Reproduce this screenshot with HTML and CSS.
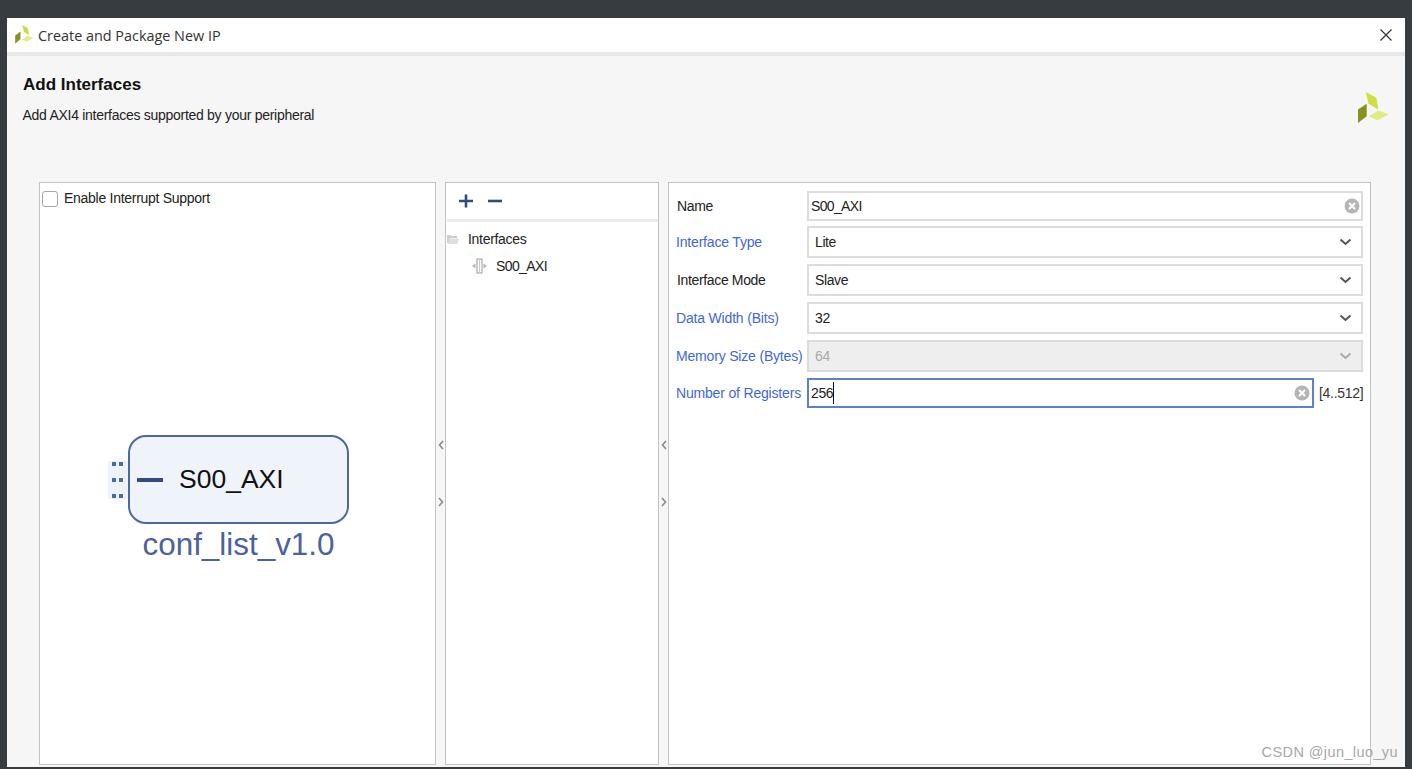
FILE: index.html
```html
<!DOCTYPE html>
<html lang="en">
<head>
<meta charset="utf-8">
<title>Create and Package New IP</title>
<link rel="stylesheet" href="styles.css">
</head>
<body>
<div class="window">
  <header class="titlebar">
    <svg class="title-logo" width="20" height="20" viewBox="0 0 32 34"><polygon points="13,0 22,5 25,17 16,12" fill="#c9d94a"/><polygon points="1,32 1,18 10,11 10,24" fill="#87911c"/><polygon points="12,25 22,18 32,22 21,28" fill="#e2ec8e"/></svg>
    <span class="title-text">Create and Package New IP</span>
    <svg class="close" width="14" height="14" viewBox="0 0 14 14"><path d="M1.5 1.5 12.5 12.5M12.5 1.5 1.5 12.5" stroke="#333" stroke-width="1.2" fill="none"/></svg>
  </header>
  <div class="band"></div>
  <section class="intro">
    <div>
      <h1 class="heading">Add Interfaces</h1>
      <p class="sub">Add AXI4 interfaces supported by your peripheral</p>
    </div>
    <svg class="big-logo" width="33" height="33" viewBox="0 0 32 34"><polygon points="8,0 19,6 21,18 11,12" fill="#cfdf3f"/><polygon points="0,32 0,18 9,12 9,25" fill="#87911c"/><polygon points="11,25 21,19 32,23 20,29" fill="#e0ec80"/></svg>
  </section>
  <main class="panels">
    <div class="panel left">
      <label class="check"><span class="box"></span>Enable Interrupt Support</label>
      <div class="symbol">
        <div class="port-dots">
          <i></i><i></i><i></i><i></i><i></i><i></i>
        </div>
        <div class="block"><span class="dash"></span><span class="block-name">S00_AXI</span></div>
        <div class="symbol-name">conf_list_v1.0</div>
      </div>
    </div>
    <div class="gutter">
      <svg width="6" height="10" viewBox="0 0 6 10"><path d="M5 1 1.5 5 5 9" stroke="#8a8a8a" stroke-width="1.6" fill="none"/></svg>
      <svg width="6" height="10" viewBox="0 0 6 10"><path d="M1 1 4.5 5 1 9" stroke="#8a8a8a" stroke-width="1.6" fill="none"/></svg>
    </div>
    <div class="panel middle">
      <div class="toolbar">
        <svg width="16" height="16" viewBox="0 0 16 16"><path d="M8 1.5V14.500M1 8H15" stroke="#34497f" stroke-width="2.6" fill="none"/></svg>
        <svg width="16" height="16" viewBox="0 0 16 16"><path d="M1 8H15" stroke="#34497f" stroke-width="2.6" fill="none"/></svg>
      </div>
      <div class="tree-row root">
        <svg width="12" height="10" viewBox="0 0 12 10"><path d="M0 1h4l1 1h5v2H3L1.500 9H0z" fill="#cfcfcf"/><path d="M3 4.500h9L10.500 10H1z" fill="#dedede"/></svg>
        <span>Interfaces</span>
      </div>
      <div class="tree-row child">
        <svg width="15" height="16" viewBox="0 0 15 16"><rect x="5" y="1" width="5" height="14" fill="#fff" stroke="#9a9a9a"/><path d="M0 8 3.500 5.500V10.500zM15 8 11.500 5.500V10.500z" fill="#b4b4b4"/><path d="M7.500 2V14" stroke="#c8c8c8"/></svg>
        <span>S00_AXI</span>
      </div>
    </div>
    <div class="gutter">
      <svg width="6" height="10" viewBox="0 0 6 10"><path d="M5 1 1.500 5 5 9" stroke="#8a8a8a" stroke-width="1.6" fill="none"/></svg>
      <svg width="6" height="10" viewBox="0 0 6 10"><path d="M1 1 4.500 5 1 9" stroke="#8a8a8a" stroke-width="1.600" fill="none"/></svg>
    </div>
    <div class="panel right">
      <div class="form-row row-name">
        <label class="lbl">Name</label>
        <div class="field text"><span class="axi">S00_AXI</span>
          <svg class="clear" width="16" height="16" viewBox="0 0 16 16"><circle cx="8" cy="8" r="7.500" fill="#b5b5b5"/><path d="M5 5 11 11M11 5 5 11" stroke="#fff" stroke-width="2"/></svg>
        </div>
      </div>
      <div class="form-row row-tall">
        <label class="lbl link">Interface Type</label>
        <div class="field select"><span>Lite</span>
          <svg class="chev" width="13" height="8" viewBox="0 0 13 8"><path d="M1.500 1.500 6.500 6 11.500 1.500" stroke="#555" stroke-width="2" fill="none"/></svg>
        </div>
      </div>
      <div class="form-row row-tall">
        <label class="lbl">Interface Mode</label>
        <div class="field select"><span>Slave</span>
          <svg class="chev" width="13" height="8" viewBox="0 0 13 8"><path d="M1.500 1.500 6.500 6 11.500 1.500" stroke="#555" stroke-width="2" fill="none"/></svg>
        </div>
      </div>
      <div class="form-row row-tall">
        <label class="lbl link">Data Width (Bits)</label>
        <div class="field select"><span>32</span>
          <svg class="chev" width="13" height="8" viewBox="0 0 13 8"><path d="M1.500 1.500 6.500 6 11.500 1.500" stroke="#555" stroke-width="2" fill="none"/></svg>
        </div>
      </div>
      <div class="form-row row-tall">
        <label class="lbl link">Memory Size (Bytes)</label>
        <div class="field select disabled"><span>64</span>
          <svg class="chev" width="13" height="8" viewBox="0 0 13 8"><path d="M1.500 1.500 6.500 6 11.500 1.500" stroke="#aaa" stroke-width="2" fill="none"/></svg>
        </div>
      </div>
      <div class="form-row row-num">
        <label class="lbl link">Number of Registers</label>
        <div class="field text focus"><span class="caret">256</span>
          <svg class="clear" width="16" height="16" viewBox="0 0 16 16"><circle cx="8" cy="8" r="7.500" fill="#b5b5b5"/><path d="M5 5 11 11M11 5 5 11" stroke="#fff" stroke-width="2"/></svg>
        </div>
        <span class="range">[4..512]</span>
      </div>
    </div>
  </main>
</div>
<div class="watermark">CSDN @jun_luo_yu</div>
</body>
</html>
```
FILE: styles.css
```css
* { box-sizing: border-box; }
html, body { height: 100%; }
body {
  margin: 0;
  padding: 18px 7px 2px;
  height: 769px;
  overflow: hidden;
  background: #373c40;
  font-family: "Liberation Sans", Arial, sans-serif;
  font-size: 14px;
  color: #222;
  position: relative;
}
.window {
  height: 749px;
  background: #f6f6f6;
  display: flex;
  flex-direction: column;
}
.titlebar {
  height: 34px;
  flex: none;
  background: #fff;
  display: flex;
  align-items: center;
  padding: 0 12px 0 7px;
}
.title-logo { margin-right: 4px; }
.title-text { font-family: "Open Sans", sans-serif; font-size: 14.400px; color: #333; flex: 1; }
.band { height: 4px; flex: none; background: #e8e8e8; }
.intro {
  height: 126px;
  flex: none;
  display: flex;
  justify-content: space-between;
  padding: 19px 15px 0 16px;
}
.heading { margin: 0; font-size: 17px; line-height: 19px; font-weight: 700; color: #111; }
.sub { margin: 13px 0 0 -0.5px; font-size: 14px; line-height: 16px; letter-spacing: -0.28px; color: #222; }
.big-logo { margin-top: 17px; }
.panels {
  flex: 1;
  display: flex;
  padding: 0 34px 2px 32px;
  min-height: 0;
}
.panel { background: #fff; border: 1px solid #c4c4c4; }
.left { width: 397px; flex: none; position: relative; }
.middle { width: 214px; flex: none; }
.right { flex: 1; padding-top: 8px; }
.gutter {
  width: 9px;
  flex: none;
  display: flex;
  flex-direction: column;
  align-items: center;
  gap: 47px;
  padding-top: 258px;
}
.check { display: flex; align-items: center; gap: 6px; padding: 7px 0 0 2px; font-size: 14px; letter-spacing: -0.28px; line-height: 17px; }
.box { width: 16px; height: 16px; border: 1.500px solid #a8a8a8; border-radius: 3px; background: #fff; }
.symbol { position: absolute; left: 68px; top: 252px; width: 241px; height: 130px; }
.port-dots {
  position: absolute;
  left: 0; top: 26px;
  width: 21px; height: 38px;
  background: #eef3fa;
  display: grid;
  grid-template-columns: repeat(2, 4px);
  gap: 0 3px;
  align-content: space-between;
  padding: 1px 0 1px 4px;
}
.port-dots i { height: 4px; background: #4a6aa5; display: block; }
.block {
  position: absolute;
  left: 20px; top: 0;
  width: 221px; height: 89px;
  background: #eff4fa;
  border: 2px solid #4f66a5;
  border-radius: 18px;
  display: flex;
  align-items: center;
  padding-left: 7px;
  font-size: 26.500px;
}
.dash { width: 26px; height: 4px; background: #34497f; }
.block-name { margin-left: 16px; color: #111; }
.symbol-name { position: absolute; left: 20px; right: 0; top: 89px; text-align: center; font-size: 31.400px; line-height: 41px; color: #4a62a0; }
.toolbar {
  height: 39px;
  border-bottom: 3px solid #ececec;
  display: flex;
  align-items: center;
  gap: 13px;
  padding: 0 0 0 11px;
  margin-left: 1px;
}
.tree-row { display: flex; align-items: center; font-size: 14px; letter-spacing: -0.3px; height: 27px; }
.root { padding-left: 1px; gap: 9px; margin-top: 3px; }
.child { padding-left: 26px; gap: 9px; letter-spacing: -0.6px; }
.form-row { display: flex; align-items: center; padding-left: 8px; padding-right: 7px; }
.row-name { height: 30px; }
.row-tall { height: 32px; margin-top: 6px; }
.row-tall:nth-child(2) { margin-top: 5px; }
.row-num { height: 30px; margin-top: 6px; }
.lbl { width: 130px; flex: none; font-size: 14px; letter-spacing: -0.35px; color: #222; white-space: nowrap; }
.lbl.link { color: #3f68d8; margin-left: -1px; margin-right: 1px; letter-spacing: -0.18px; }
.field {
  flex: 1;
  height: 100%;
  background: #fff;
  border: 2px solid #dcdcdc;
  display: flex;
  align-items: center;
  justify-content: space-between;
  font-size: 14px;
  letter-spacing: -0.4px;
  color: #222;
}
.axi { letter-spacing: -0.65px; }
.field.text { padding: 0 1px 0 2px; }
.field.select { padding: 0 9px 0 6px; }
.field.disabled { background: #eee; color: #aaa; }
.field.focus { border-color: #5b7fd6; flex: none; width: 507px; padding-right: 2px; }
.caret { border-right: 1px solid #111; padding-right: 0; line-height: 22px; }
.range { margin-left: 5px; font-size: 14px; letter-spacing: -0.3px; white-space: nowrap; color: #333; }
.watermark {
  position: absolute;
  right: 14px;
  bottom: 9px;
  font-family: "Liberation Sans", sans-serif;
  font-size: 14.500px;
  letter-spacing: 0.4px;
  color: #a8a8a8;
}
```
